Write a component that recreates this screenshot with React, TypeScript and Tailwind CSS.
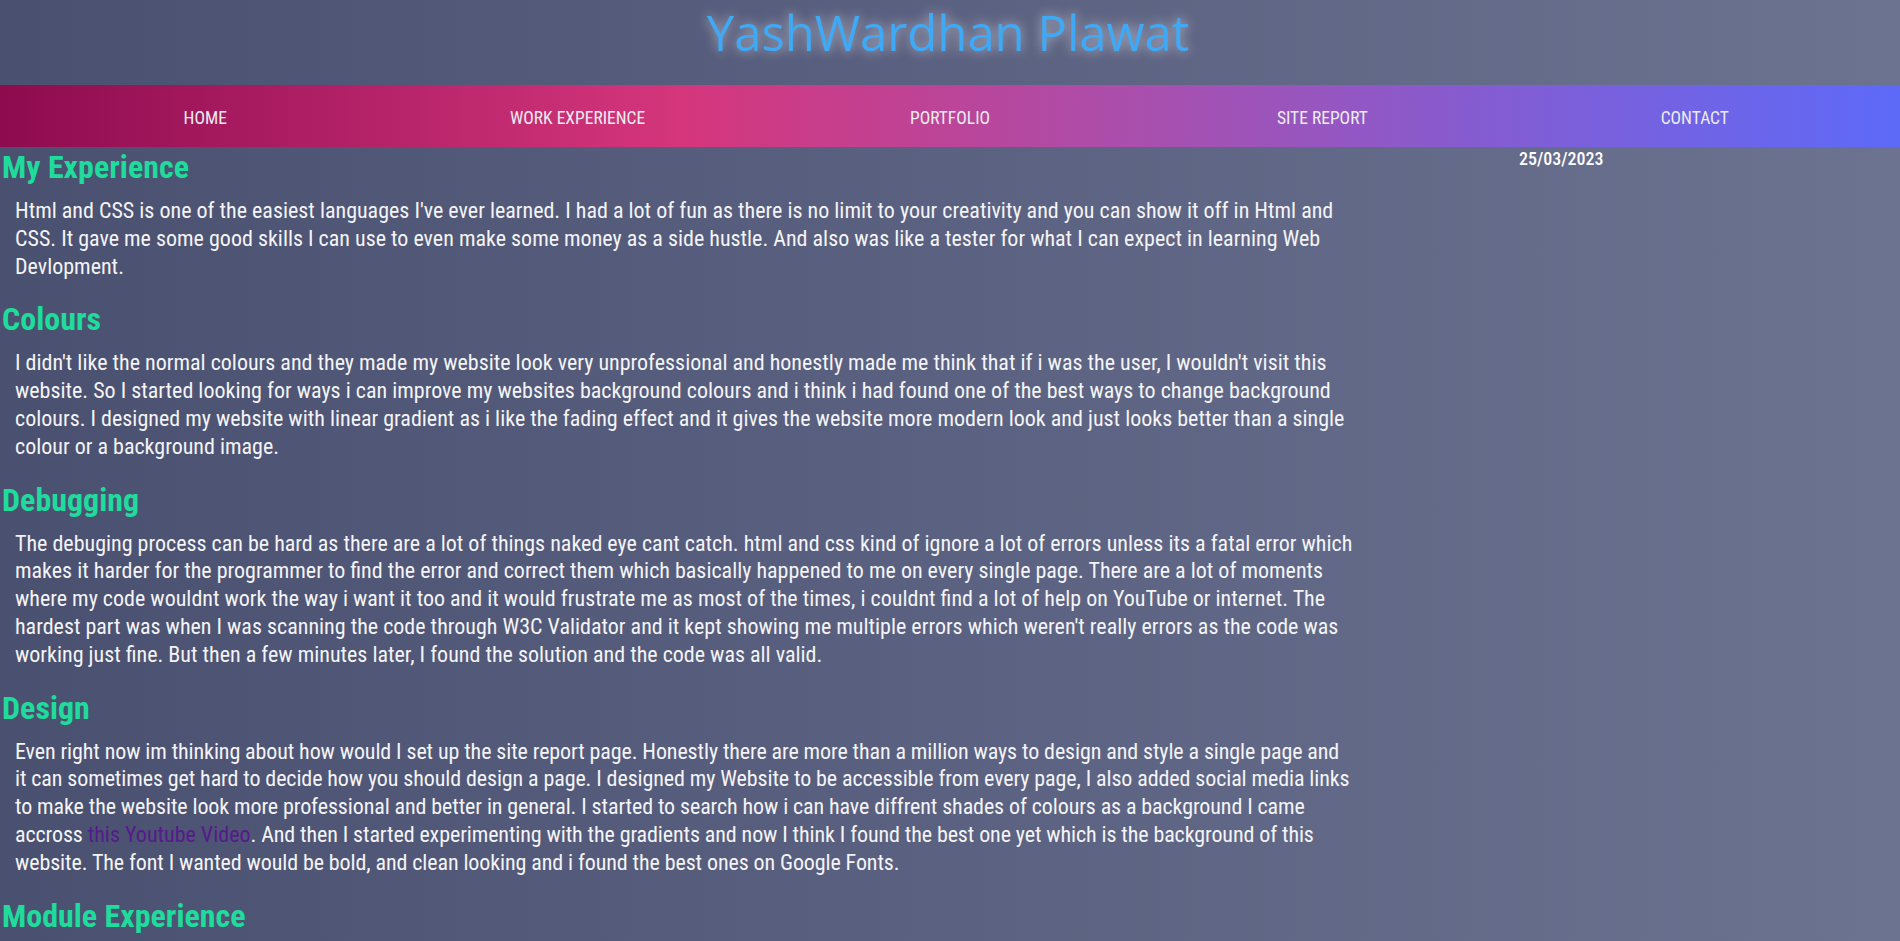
import React from 'react';

const navItems = ['HOME', 'WORK EXPERIENCE', 'PORTFOLIO', 'SITE REPORT', 'CONTACT'];

export default function App() {
  return (
    <div
      className="min-h-screen w-full bg-[linear-gradient(to_right,#4a5070,#6c7391)] text-[#f4f4f6]"
      style={{ fontFamily: "'Roboto Condensed', Roboto, sans-serif" }}
    >
      {/* header */}
      <header className="h-[85px] flex justify-center">
        <h1
          className="text-[49px] leading-[64px] text-[#3fa9f5] [text-shadow:0_0_12px_rgba(255,255,255,0.6)] -ml-[4px]"
          style={{ fontFamily: "'Open Sans', sans-serif" }}
        >
          YashWardhan Plawat
        </h1>
      </header>

      {/* nav */}
      <nav className="h-[62px] bg-[linear-gradient(to_right,#8e0b50_0%,#d5367c_36%,#a94fad_60%,#7d5fd9_82%,#5d6af8_100%)]">
        <ul className="grid grid-cols-5 h-full px-[19px] pt-[4px]">
          {navItems.map((item) => (
            <li key={item} className="flex items-center justify-center text-[17.5px] text-[#ececf0]">
              {item}
            </li>
          ))}
        </ul>
      </nav>

      <div className="flex">
        <main className="w-[1368px] pb-8">
          <h2 className="mt-[1px] text-[32px] leading-[38px] font-bold text-[#1fdb9c] pl-[2px]">My Experience</h2>
          <p className="mx-[15px] mt-[11px] mb-[20px] text-[22px] leading-[27.8px]">
            Html and CSS is one of the easiest languages I've ever learned. I had a lot of fun as there is no limit to your creativity and you can show it off in Html and CSS. It gave me some good skills I can use to even make some money as a side hustle. And also was like a tester for what I can expect in learning Web Devlopment.
          </p>

          <h2 className="text-[32px] leading-[38px] font-bold text-[#1fdb9c] pl-[2px]">Colours</h2>
          <p className="mx-[15px] mt-[11px] mb-[20px] text-[22px] leading-[27.8px]">
            I didn't like the normal colours and they made my website look very unprofessional and honestly made me think that if i was the user, I wouldn't visit this website. So I started looking for ways i can improve my websites background colours and i think i had found one of the best ways to change background colours. I designed my website with linear gradient as i like the fading effect and it gives the website more modern look and just looks better than a single colour or a background image.
          </p>

          <h2 className="text-[32px] leading-[38px] font-bold text-[#1fdb9c] pl-[2px]">Debugging</h2>
          <p className="mx-[15px] mt-[11px] mb-[20px] text-[22px] leading-[27.8px]">
            The debuging process can be hard as there are a lot of things naked eye cant catch. html and css kind of ignore a lot of errors unless its a fatal error which makes it harder for the programmer to find the error and correct them which basically happened to me on every single page. There are a lot of moments where my code wouldnt work the way i want it too and it would frustrate me as most of the times, i couldnt find a lot of help on YouTube or internet. The hardest part was when I was scanning the code through W3C Validator and it kept showing me multiple errors which weren't really errors as the code was working just fine. But then a few minutes later, I found the solution and the code was all valid.
          </p>

          <h2 className="text-[32px] leading-[38px] font-bold text-[#1fdb9c] pl-[2px]">Design</h2>
          <p className="mx-[15px] mt-[11px] mb-[20px] text-[22px] leading-[27.8px] tracking-[-0.1px]">
            Even right now im thinking about how would I set up the site report page. Honestly there are more than a million ways to design and style a single page and it can sometimes get hard to decide how you should design a page. I designed my Website to be accessible from every page, I also added social media links to make the website look more professional and better in general. I started to search how i can have diffrent shades of colours as a background I came accross{' '}
            <a href="#" className="text-[#551a8b] tracking-normal">this Youtube Video</a>. And then I started experimenting with the gradients and now I think I found the best one yet which is the background of this website. The font I wanted would be bold, and clean looking and i found the best ones on Google Fonts.
          </p>

          <h2 className="text-[32px] leading-[38px] font-bold text-[#1fdb9c] pl-[2px]">Module Experience</h2>
        </main>

        <aside className="flex-1 pl-[151px]">
          <p className="-mt-[2px] text-[18px] font-medium text-white">25/03/2023</p>
        </aside>
      </div>
    </div>
  );
}
